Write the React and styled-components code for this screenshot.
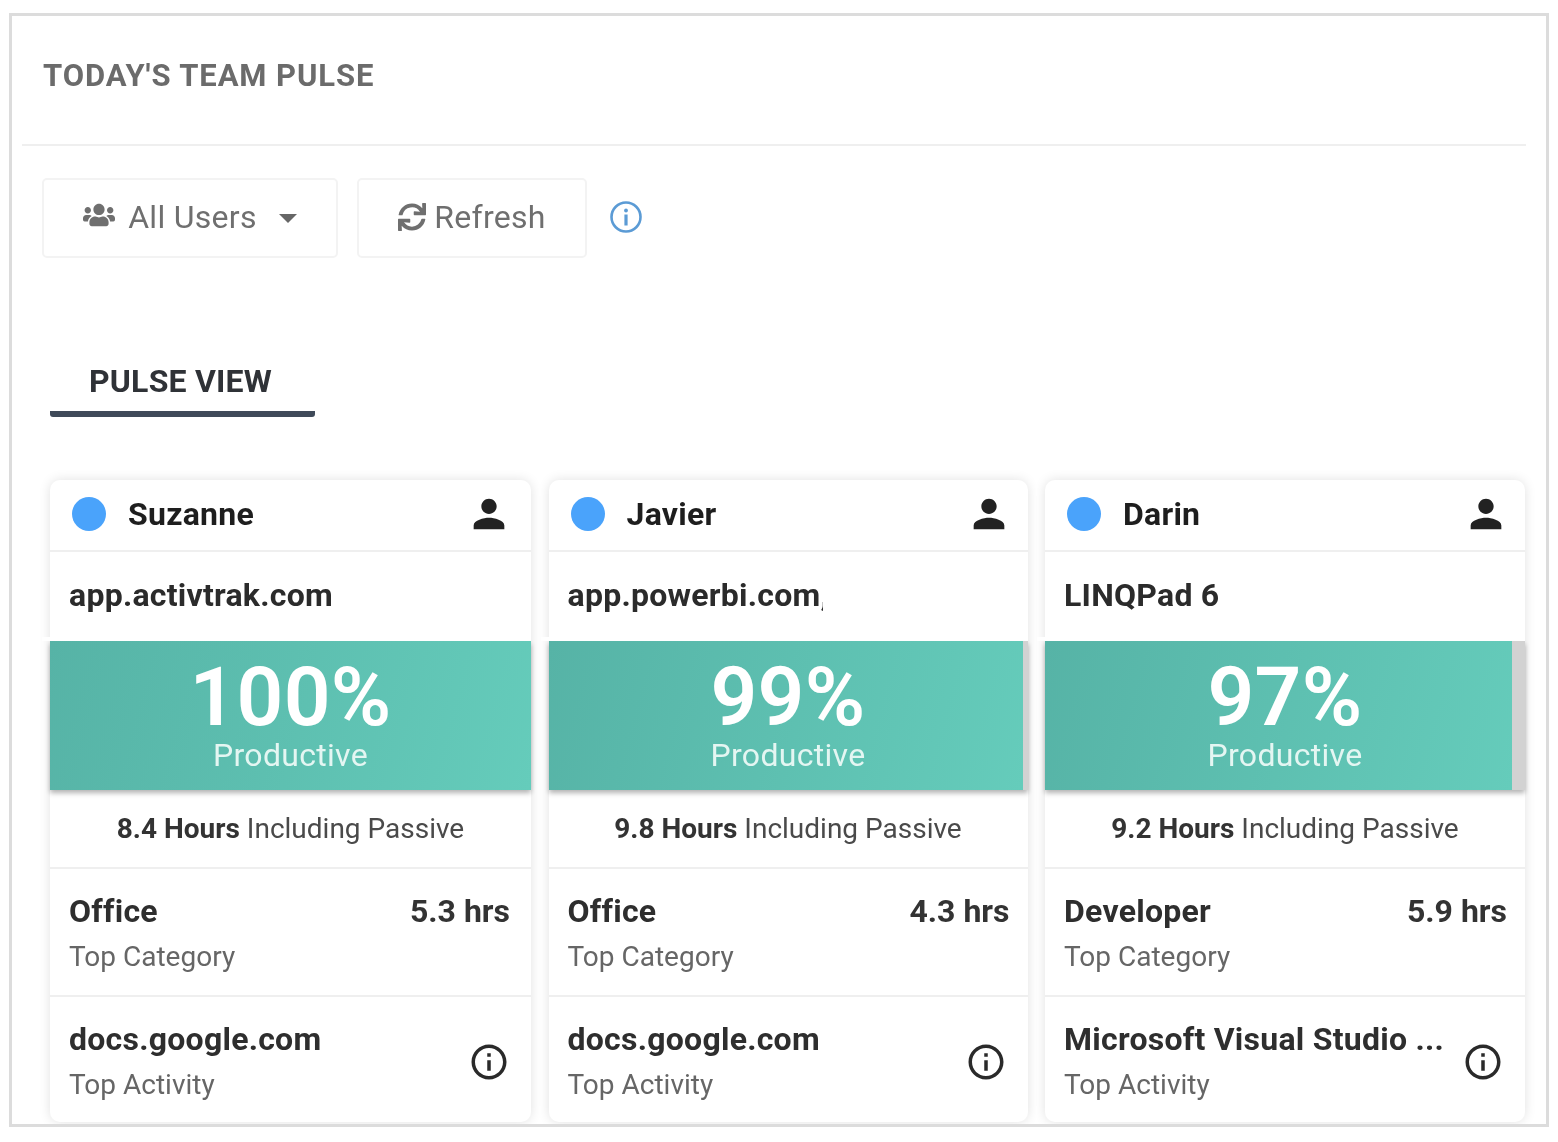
import React from "react";
import styled, { createGlobalStyle } from "styled-components";
import { FaUsers, FaSync } from "react-icons/fa";
import { MdPerson, MdInfoOutline } from "react-icons/md";

const GlobalStyle = createGlobalStyle`
  html, body {
    margin: 0;
    padding: 0;
    background: #fff;
  }
  body {
    font-family: Roboto, "Liberation Sans", sans-serif;
    color: #262626;
  }
`;

const people = [
  {
    name: "Suzanne",
    app: "app.activtrak.com",
    percent: 100,
    fill: 481,
    inset: 3,
    hours: "8.4",
    category: "Office",
    categoryHours: "5.3 hrs",
    activity: "docs.google.com",
  },
  {
    name: "Javier",
    app: "app.powerbi.com,",
    appWidth: 255,
    percent: 99,
    fill: 474,
    inset: 0,
    hours: "9.8",
    category: "Office",
    categoryHours: "4.3 hrs",
    activity: "docs.google.com",
  },
  {
    name: "Darin",
    app: "LINQPad 6",
    percent: 97,
    fill: 467,
    inset: 0,
    hours: "9.2",
    category: "Developer",
    categoryHours: "5.9 hrs",
    activity: "Microsoft Visual Studio ...",
  },
];

function PulseCard({ person }) {
  return (
    <Card>
      <CardHeader $inset={person.inset}>
        <StatusDot />
        <Name>{person.name}</Name>
        <PersonIcon />
      </CardHeader>
      <AppRow>
        <AppName $width={person.appWidth}>{person.app}</AppName>
      </AppRow>
      <Gap />
      <ScoreBar style={{ backgroundSize: `${person.fill}px 100%` }}>
        <Percent>{person.percent}%</Percent>
        <ScoreLabel>Productive</ScoreLabel>
      </ScoreBar>
      <HoursRow>
        <strong>{person.hours} Hours</strong> Including Passive
      </HoursRow>
      <StatRow>
        <StatText>
          <StatTitle>{person.category}</StatTitle>
          <StatLabel>Top Category</StatLabel>
        </StatText>
        <StatHours $inset={person.inset}>{person.categoryHours}</StatHours>
      </StatRow>
      <StatRow $last>
        <StatText>
          <StatTitle>{person.activity}</StatTitle>
          <StatLabel>Top Activity</StatLabel>
        </StatText>
        <RowInfoIcon />
      </StatRow>
    </Card>
  );
}

export default function App() {
  return (
    <Page>
      <GlobalStyle />
      <Frame>
        <Title>TODAY'S TEAM PULSE</Title>
        <Divider />
        <Toolbar>
          <ToolButton $width={296}>
            <UsersIcon />
            <span>All Users</span>
            <Caret />
          </ToolButton>
          <ToolButton $width={230} $tight>
            <FaSync size={28} />
            <span>Refresh</span>
          </ToolButton>
          <BlueInfo>
            <svg width="34" height="34" viewBox="0 0 34 34" fill="none">
              <circle cx="17" cy="17" r="14.5" stroke="#5b9bd5" strokeWidth="2.6" />
              <circle cx="17" cy="10.5" r="1.9" fill="#5b9bd5" />
              <rect x="15.4" y="14.5" width="3.2" height="11" fill="#5b9bd5" />
            </svg>
          </BlueInfo>
        </Toolbar>
        <Tab>PULSE VIEW</Tab>
        <Cards>
          {people.map((person) => (
            <PulseCard key={person.name} person={person} />
          ))}
        </Cards>
      </Frame>
    </Page>
  );
}

const Page = styled.div`
  width: 1558px;
  height: 1142px;
  padding: 13px 9px 0 9px;
  box-sizing: border-box;
  overflow: hidden;
`;
const Frame = styled.div`
  width: 1540px;
  height: 1114px;
  box-sizing: border-box;
  border: 3px solid #dcdcdc;
  padding: 0 20px 0 10px;
  overflow: hidden;
  filter: blur(0.4px);
`;
const Title = styled.h1`
  margin: 0;
  padding: 41px 0 0 21px;
  height: 88px;
  box-sizing: border-box;
  font-size: 31px;
  line-height: 37px;
  font-weight: 700;
  letter-spacing: 0.9px;
  color: #6b6b6b;
`;
const Divider = styled.div`
  height: 2px;
  margin-top: 40px;
  background: #efefef;
`;
const Toolbar = styled.div`
  display: flex;
  align-items: center;
  gap: 19px;
  margin: 32px 0 0 20px;
`;
const ToolButton = styled.div`
  width: ${(p) => p.$width}px;
  height: 80px;
  box-sizing: border-box;
  display: flex;
  align-items: center;
  justify-content: center;
  gap: ${(p) => (p.$tight ? "8px" : "13px")};
  padding-bottom: 2px;
  border: 2px solid #f3f3f3;
  border-radius: 5px;
  background: #fff;
  color: #6f6f6f;
  font-size: 32px;
  span {
    letter-spacing: 0.3px;
  }
`;
const UsersIcon = styled(FaUsers)`
  width: 32px;
  height: 32px;
  margin-top: -5px;
`;
const Caret = styled.i`
  width: 0;
  height: 0;
  margin: 3px 0 0 9px;
  border-left: 9px solid transparent;
  border-right: 9px solid transparent;
  border-top: 9px solid #666;
`;
const BlueInfo = styled.div`
  display: flex;
  margin: -3px 0 0 3px;
`;
const Tab = styled.div`
  width: 265px;
  box-sizing: border-box;
  margin: 104px 0 0 28px;
  padding: 0 0 11px 39px;
  border-bottom: 6px solid #3f4a59;
  border-radius: 0 0 3px 3px;
  font-size: 32px;
  line-height: 38px;
  font-weight: 700;
  letter-spacing: 0.2px;
  color: #2f3237;
`;
const Cards = styled.div`
  display: grid;
  grid-template-columns: 481px 479px 480px;
  column-gap: 17.5px;
  margin: 63px 0 0 28px;
`;
const Card = styled.div`
  height: 642px;
  background: #fff;
  border-radius: 10px;
  box-shadow: 0 0 12px rgba(0, 0, 0, 0.12);
`;
const CardHeader = styled.div`
  height: 72px;
  box-sizing: border-box;
  display: flex;
  align-items: center;
  padding: 0 ${(p) => 16 + p.$inset}px 2px 22px;
  border-bottom: 2px solid #efefef;
`;
const StatusDot = styled.span`
  width: 34px;
  height: 34px;
  flex: none;
  border-radius: 50%;
  background: #4aa3fb;
`;
const Name = styled.span`
  flex: 1;
  margin-left: 22px;
  font-size: 32px;
  font-weight: 700;
  letter-spacing: 0.25px;
  color: #1e1e1e;
`;
const PersonIcon = styled(MdPerson)`
  width: 46px;
  height: 46px;
  flex: none;
  color: #222;
`;
const AppRow = styled.div`
  height: 85px;
  box-sizing: border-box;
  padding: 24px 18px 0 19px;
`;
const AppName = styled.div`
  width: ${(p) => (p.$width ? `${p.$width}px` : "auto")};
  overflow: hidden;
  font-size: 32px;
  line-height: 38px;
  font-weight: 700;
  letter-spacing: 0.25px;
  color: #2b2b2b;
  white-space: nowrap;
`;
const Gap = styled.div`
  position: relative;
  z-index: 1;
  height: 4px;
  margin-left: -8px;
  background: #fff;
`;
const ScoreBar = styled.div`
  height: 149px;
  display: flex;
  flex-direction: column;
  align-items: center;
  background: linear-gradient(105deg, #56b3a6 0%, #65ccbb 100%) no-repeat left top, #d2d2d2;
  box-shadow: 0 3px 5px rgba(0, 0, 0, 0.3);
  color: #fff;
`;
const Percent = styled.div`
  margin-top: 17px;
  font-size: 82px;
  line-height: 78px;
  font-weight: 600;
  letter-spacing: 0.3px;
`;
const ScoreLabel = styled.div`
  font-size: 32px;
  line-height: 38px;
  letter-spacing: 0.3px;
  color: #e4f6f2;
`;
const HoursRow = styled.div`
  height: 79px;
  box-sizing: border-box;
  padding-top: 21px;
  text-align: center;
  font-size: 28px;
  line-height: 35px;
  color: #4a4a4a;
  border-bottom: 2px solid #efefef;
  strong {
    font-weight: 700;
    color: #333;
  }
`;
const StatRow = styled.div`
  height: ${(p) => (p.$last ? "125px" : "128px")};
  box-sizing: border-box;
  display: flex;
  align-items: flex-start;
  justify-content: space-between;
  padding: 23px 18px 0 19px;
  border-bottom: ${(p) => (p.$last ? "none" : "2px solid #efefef")};
`;
const StatText = styled.div`
  min-width: 0;
`;
const StatTitle = styled.div`
  font-size: 32px;
  line-height: 38px;
  font-weight: 700;
  letter-spacing: 0.25px;
  color: #2e2e2e;
  white-space: nowrap;
`;
const StatLabel = styled.div`
  margin-top: 10px;
  font-size: 28px;
  line-height: 34px;
  color: #666;
`;
const StatHours = styled.div`
  margin-right: ${(p) => p.$inset}px;
  font-size: 32px;
  line-height: 38px;
  font-weight: 700;
  color: #333;
`;
const RowInfoIcon = styled(MdInfoOutline)`
  width: 42px;
  height: 42px;
  flex: none;
  margin: 21px 3px 0 0;
  color: #2a2a2a;
`;
